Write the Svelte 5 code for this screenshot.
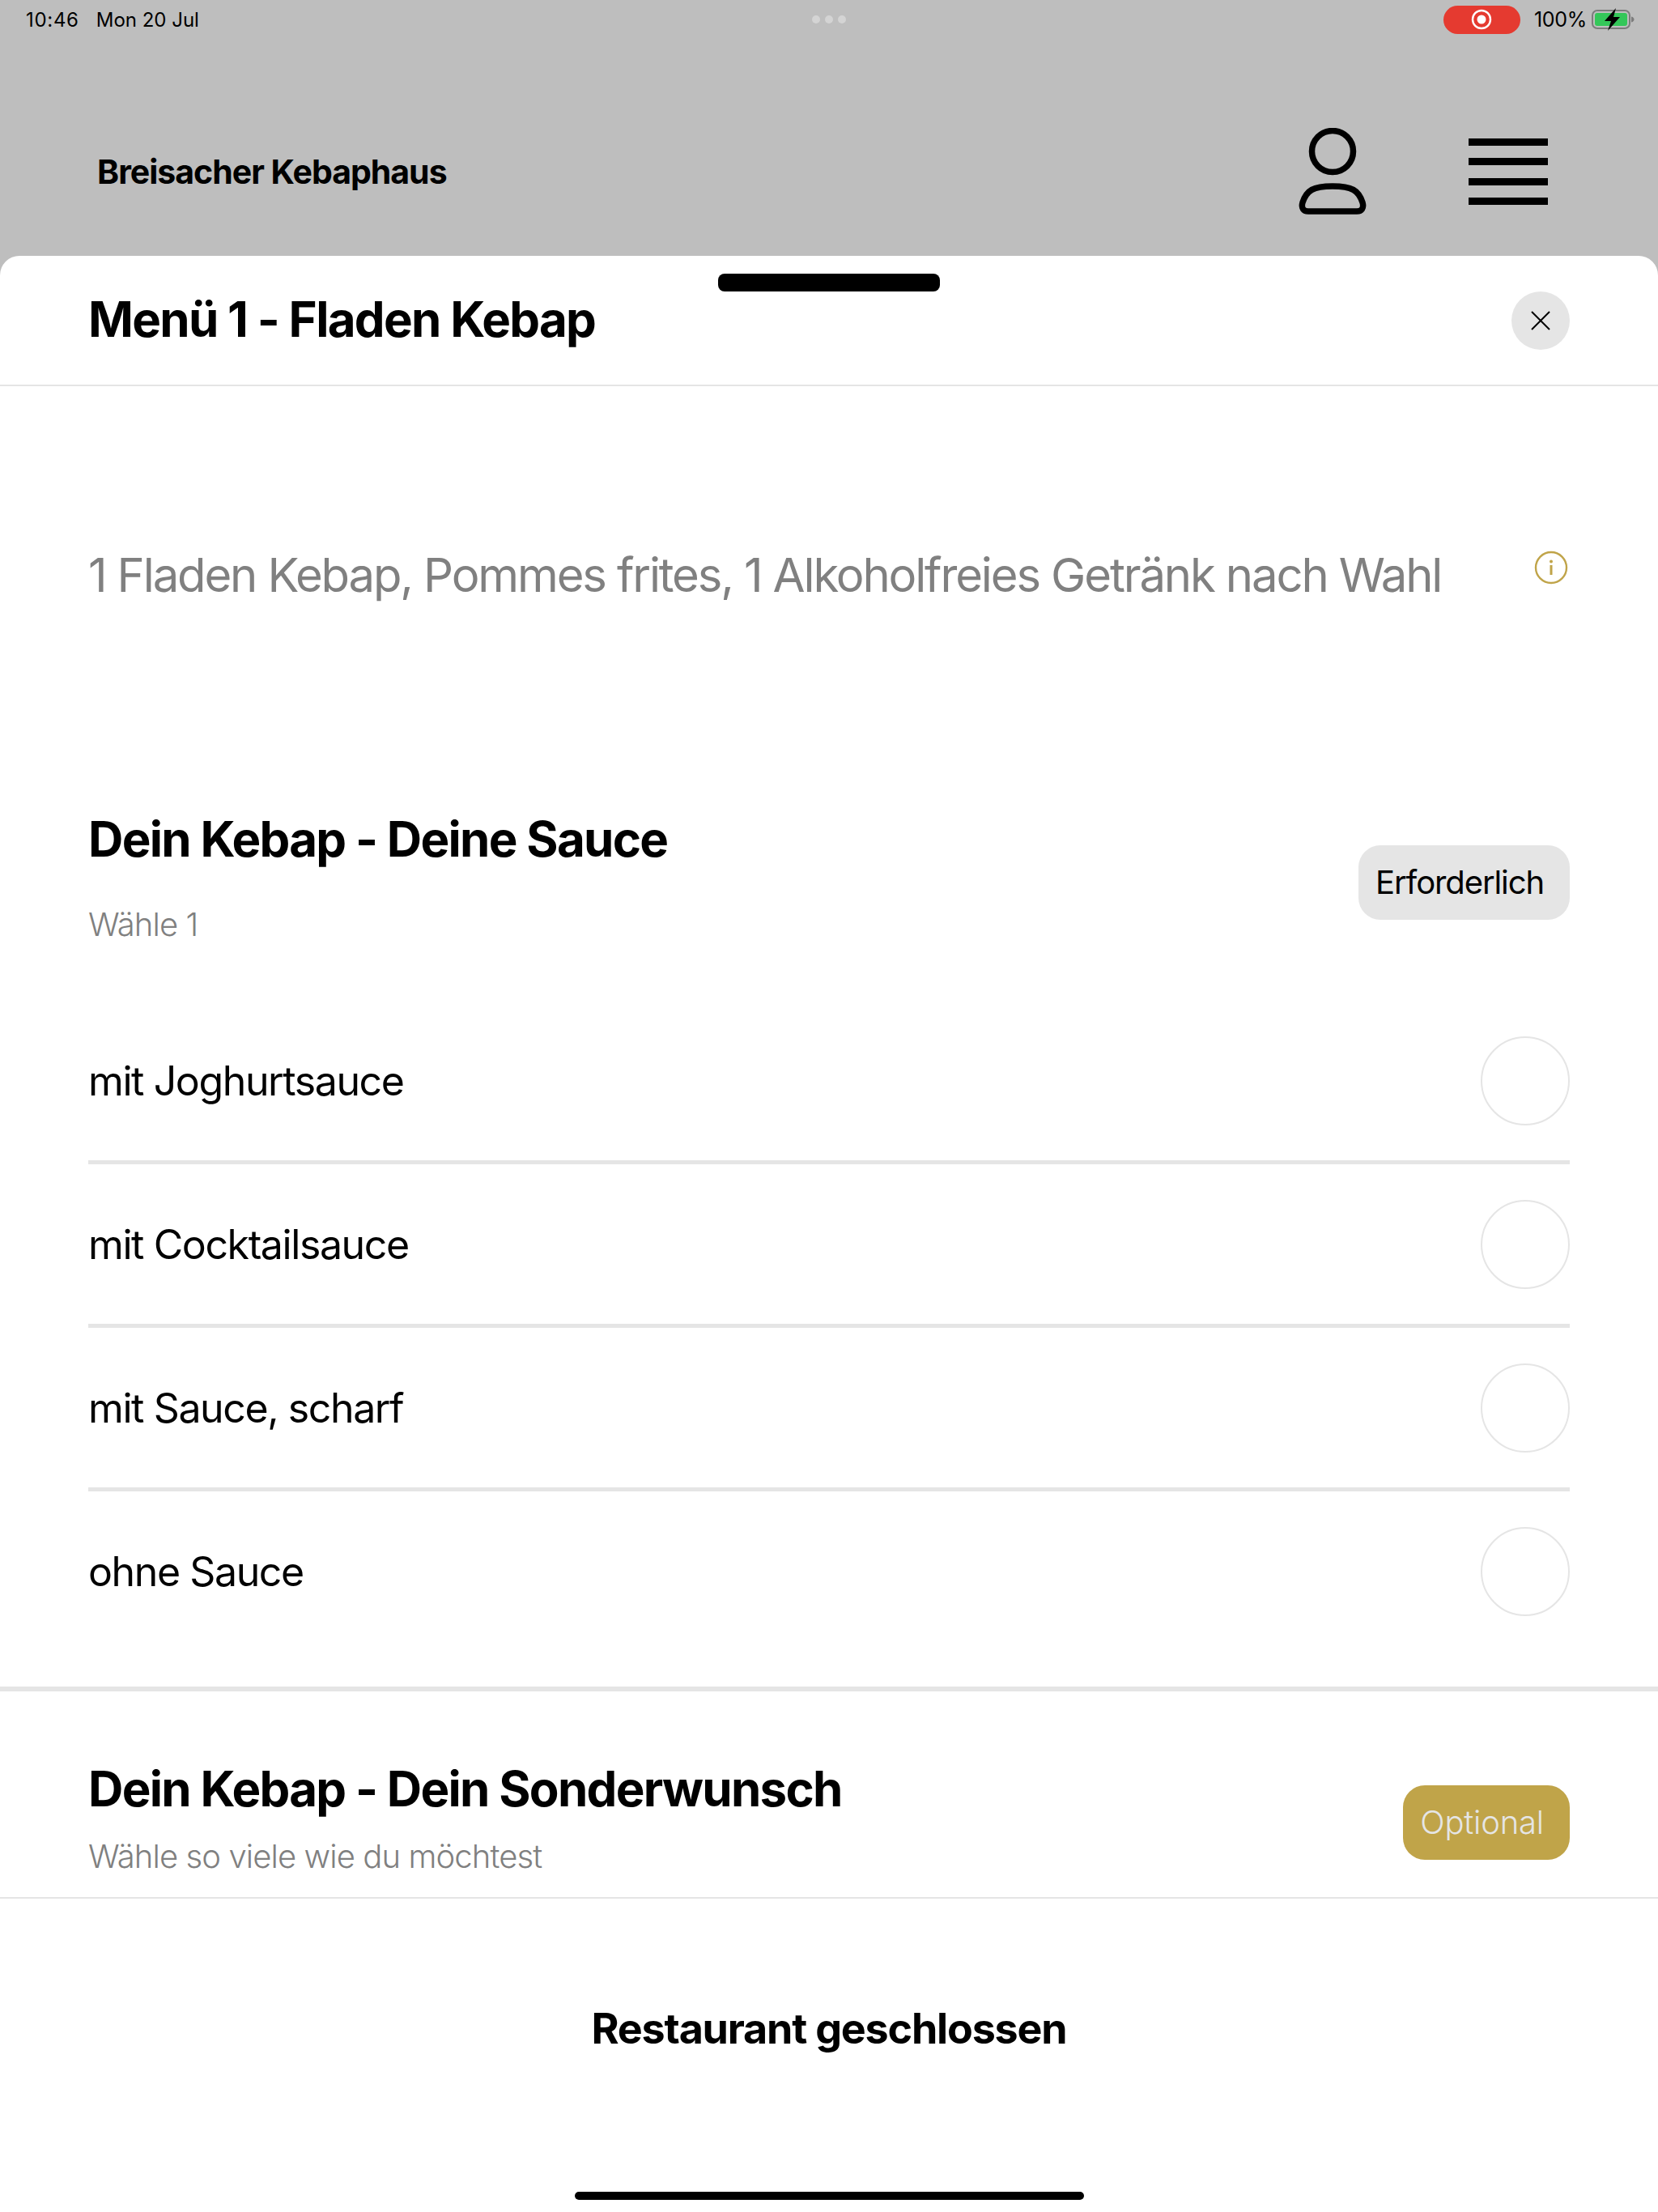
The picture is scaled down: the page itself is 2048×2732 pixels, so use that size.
<script lang="ts">
  const sauces = ["mit Joghurtsauce", "mit Cocktailsauce", "mit Sauce, scharf", "ohne Sauce"];
</script>

<div class="page">
  <div class="status">
    <div class="clock"><span class="time">10:46</span><span>Mon 20 Jul</span></div>
    <div class="dots"><i></i><i></i><i></i></div>
    <div class="status-right">
      <div class="rec">
        <svg width="26" height="26" viewBox="0 0 26 26">
          <circle cx="13" cy="13" r="11" fill="none" stroke="#fff" stroke-width="2.4" />
          <circle cx="13" cy="13" r="5.5" fill="#fff" />
        </svg>
      </div>
      <span class="pct">100%</span>
      <svg class="battery" width="54" height="28" viewBox="0 0 54 28">
        <rect x="1" y="3" width="46" height="22" rx="6" fill="none" stroke="#7c7c7c" stroke-width="2" />
        <rect x="4" y="6" width="40" height="16" rx="3" fill="#34c759" />
        <path d="M49 10.5c2.5.6 3.5 2 3.5 3.5s-1 2.900-3.500 3.500z" fill="#7c7c7c" />
        <path d="M30 0 16 16h8l-4 12 15-17h-8z" fill="#000" />
      </svg>
    </div>
  </div>

  <header class="topbar">
    <span class="brand">Breisacher Kebaphaus</span>
    <div class="top-icons">
      <svg class="person" width="86" height="110" viewBox="0 0 86 110">
        <circle cx="43" cy="29" r="25.500" fill="none" stroke="#000" stroke-width="7.500" />
        <path d="M43 72c-24 0-32 5-37 20-2 7 1 11 7 11h60c6 0 9-4 7-11-5-15-13-20-37-20z" fill="none" stroke="#000" stroke-width="7.500" stroke-linejoin="round" />
      </svg>
      <div class="burger"><i></i><i></i><i></i><i></i></div>
    </div>
  </header>

  <main class="sheet">
    <div class="handle"></div>

    <div class="sheet-head">
      <h1>Menü 1 - Fladen Kebap</h1>
      <button type="button" class="close" aria-label="Schließen">
        <svg width="24" height="24" viewBox="0 0 24 24">
          <path d="M1 1l22 22M23 1 1 23" stroke="#000" stroke-width="2" fill="none" />
        </svg>
      </button>
    </div>

    <div class="desc">
      <p>1 Fladen Kebap, Pommes frites, 1 Alkoholfreies Getränk nach Wahl</p>
      <svg class="info" width="42" height="42" viewBox="0 0 42 42">
        <circle cx="21" cy="21" r="19" fill="none" stroke="#c0a449" stroke-width="2.400" />
        <circle cx="21" cy="13.500" r="2" fill="#c0a449" />
        <rect x="19.500" y="18" width="3" height="12" fill="#c0a449" />
      </svg>
    </div>

    <section class="group">
      <div class="group-head first">
        <div class="titles">
          <h2>Dein Kebap - Deine Sauce</h2>
          <p class="hint first-hint">Wähle 1</p>
        </div>
        <span class="pill required">Erforderlich</span>
      </div>
      <ul>
        {#each sauces as sauce}
          <li>
            <span>{sauce}</span>
            <span class="radio"></span>
          </li>
        {/each}
      </ul>
    </section>

    <section class="group second">
      <div class="group-head">
        <div>
          <h2>Dein Kebap - Dein Sonderwunsch</h2>
          <p class="hint">Wähle so viele wie du möchtest</p>
        </div>
        <span class="pill optional">Optional</span>
      </div>
    </section>

    <footer class="closed">Restaurant geschlossen</footer>
    <div class="home"></div>
  </main>
</div>

<style>
  :global(body) {
    margin: 0;
    background: #fff;
  }
  .page {
    display: flex;
    flex-direction: column;
    width: 2048px;
    height: 2732px;
    overflow: hidden;
    background: #bebebe;
    color: #000;
    font-family: Inter, "Liberation Sans", sans-serif;
  }
  .status {
    display: grid;
    grid-template-columns: 1fr auto 1fr;
    align-items: center;
    height: 48px;
    padding: 0 28px 0 32px;
    font-size: 24px;
  }
  .clock {
    display: flex;
    gap: 21px;
  }
  .time {
    letter-spacing: 0.7px;
  }
  .dots {
    display: flex;
    gap: 6px;
    margin-right: 4px;
  }
  .dots i {
    width: 10px;
    height: 10px;
    border-radius: 50%;
    background: #d4d4d4;
  }
  .status-right {
    display: flex;
    justify-content: flex-end;
    align-items: center;
  }
  .rec {
    display: flex;
    align-items: center;
    justify-content: center;
    width: 95px;
    height: 35px;
    margin-right: 17px;
    border-radius: 18px;
    background: #e53a30;
  }
  .pct {
    margin-right: 6px;
    font-size: 25px;
    letter-spacing: -0.3px;
  }
  .topbar {
    display: flex;
    justify-content: space-between;
    align-items: center;
    height: 268px;
    box-sizing: border-box;
    padding: 60px 136px 0 120px;
  }
  .brand {
    font-size: 41px;
    font-weight: 700;
    letter-spacing: -1px;
  }
  .top-icons {
    display: flex;
    align-items: center;
    gap: 125px;
  }
  .person {
    margin-top: 2px;
  }
  .burger {
    display: flex;
    flex-direction: column;
    gap: 15.500px;
    width: 98px;
  }
  .burger i {
    height: 9px;
    background: #000;
  }
  .sheet {
    position: relative;
    flex: 1;
    display: flex;
    flex-direction: column;
    border-radius: 24px 24px 0 0;
    background: #fff;
  }
  .handle {
    position: absolute;
    top: 22px;
    left: 887px;
    width: 274px;
    height: 22px;
    border-radius: 8px;
    background: #000;
  }
  .sheet-head {
    display: flex;
    justify-content: space-between;
    align-items: center;
    height: 159px;
    padding: 0 109px;
    border-bottom: 2px solid #e5e5e5;
  }
  h1, h2 {
    margin: 0;
    font-size: 60px;
    font-weight: 700;
    letter-spacing: -1.700px;
    line-height: 72px;
  }
  h1 {
    margin-bottom: 3px;
  }
  .close {
    display: flex;
    align-items: center;
    justify-content: center;
    width: 72px;
    height: 72px;
    padding: 0;
    border: none;
    border-radius: 50%;
    background: #e5e5e5;
  }
  .desc {
    display: flex;
    justify-content: space-between;
    align-items: center;
    height: 466px;
    box-sizing: border-box;
    padding: 0 109px;
    color: #808080;
  }
  .desc p {
    margin: 0;
    font-size: 58px;
    font-weight: 400;
    letter-spacing: -2.140px;
  }
  .info {
    margin: 0 2px 18px 0;
  }
  .group-head {
    display: flex;
    justify-content: space-between;
    align-items: center;
    padding: 0 109px;
  }
  .group-head.first {
    height: 293px;
  }
  .titles {
    margin-bottom: 14px;
  }
  .hint {
    margin: 23px 0 0;
    color: #808080;
    font-size: 40px;
    font-weight: 300;
    letter-spacing: -0.9px;
  }
  .first-hint {
    margin-top: 45px;
  }
  .pill {
    height: 92px;
    box-sizing: border-box;
    padding: 0 32px 0 21px;
    border-radius: 27px;
    font-size: 40px;
    font-weight: 400;
    letter-spacing: -1.100px;
    line-height: 92px;
  }
  .required {
    background: #e5e5e5;
  }
  .optional {
    margin-top: 11px;
    background: #c0a449;
    color: #e5e5e5;
    font-weight: 300;
    letter-spacing: -0.200px;
  }
  ul {
    margin: 0;
    padding: 0 109px;
    list-style: none;
  }
  li {
    display: flex;
    justify-content: space-between;
    align-items: center;
    height: 197px;
    border-bottom: 5px solid #e5e5e5;
    font-size: 50px;
    font-weight: 400;
    letter-spacing: -1.400px;
  }
  li:last-child {
    border-bottom: none;
  }
  .radio {
    width: 106px;
    height: 106px;
    border: 2px solid #e5e5e5;
    border-radius: 50%;
  }
  .second {
    margin-top: 44px;
    height: 262px;
    box-sizing: border-box;
    padding-top: 84px;
    border-top: 6px solid #e5e5e5;
    border-bottom: 2px solid #e5e5e5;
  }
  .closed {
    display: flex;
    justify-content: center;
    align-items: center;
    height: 320px;
    font-size: 52px;
    font-weight: 700;
    letter-spacing: -1.200px;
  }
  .home {
    position: absolute;
    bottom: 15px;
    left: 710px;
    width: 629px;
    height: 10px;
    border-radius: 5px;
    background: #000;
  }
</style>
